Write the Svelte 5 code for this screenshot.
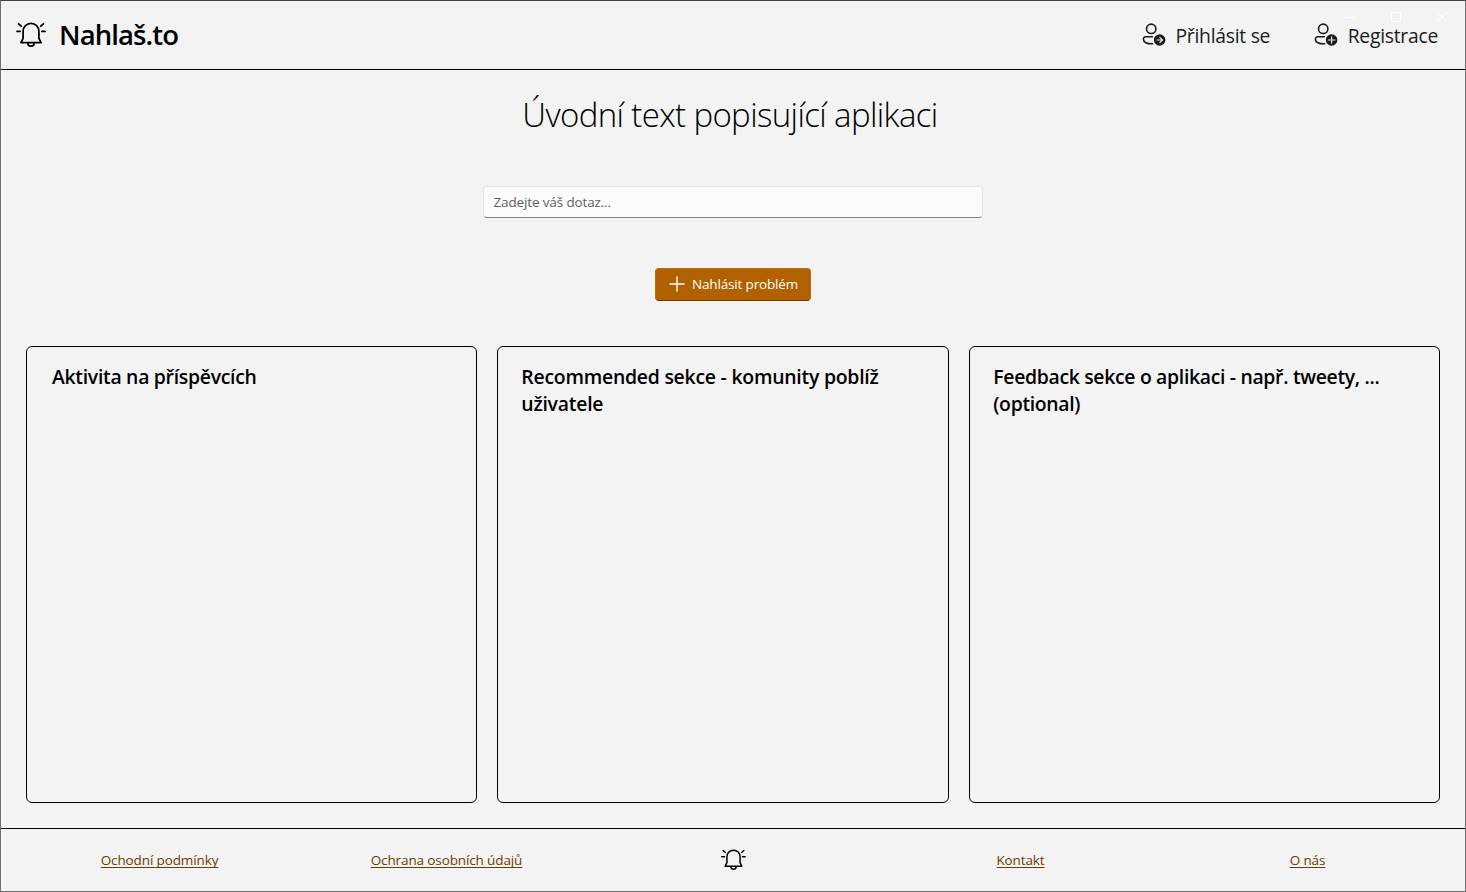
<script>
  const cards = [
    { title: 'Aktivita na příspěvcích', tracking: -0.29, indent: 25 },
    { title: 'Recommended sekce - komunity poblíž uživatele', tracking: -0.23, indent: 23.3 },
    { title: 'Feedback sekce o aplikaci - např. tweety, ... (optional)', tracking: -0.32, indent: 23.3 }
  ];
</script>

{#snippet bell(size)}
  <svg class="bell" width={size} height={size * 26 / 30} viewBox="0 0 30 26" fill="none" stroke="#000" stroke-width="1.8" stroke-linecap="round" stroke-linejoin="round">
    <path d="M5 20.7h20l-2.1-4.3V9.3a7.9 7.9 0 0 0-15.8 0v7.1z" />
    <path d="M11.8 21a3.2 3.2 0 0 0 6.4 0M1 9.4h3.2M25.8 9.4H29M2.6 1.8l2.6 2.4M27.4 1.8l-2.6 2.4" />
  </svg>
{/snippet}

{#snippet person(kind)}
  <svg class="person" width="24" height="24" viewBox="0 0 24 24" fill="none" stroke="#1b1b1b" stroke-width="1.6" stroke-linecap="round" stroke-linejoin="round">
    <circle cx="9.2" cy="5.8" r="4.7" />
    <path d="M10.4 13.8H3.6A2.2 2.2 0 0 0 1.4 16c0 3.3 3.4 5 9.2 4.8" />
    <circle cx="17.6" cy="17" r="5.8" fill="#1b1b1b" stroke="none" />
    {#if kind === 'plus'}
      <path d="M17.6 13.7v6.6M14.3 17h6.6" stroke="#f3f3f3" stroke-width="1.1" />
    {:else}
      <path d="M14.8 17h5.4M17.8 14.3l2.7 2.7-2.7 2.7" stroke="#f3f3f3" stroke-width="1.1" />
    {/if}
  </svg>
{/snippet}

<div class="window">
  <div class="controls">
    <svg width="104" height="12" viewBox="0 0 104 12" fill="none" stroke="#fff" stroke-width="1">
      <path d="M0 6.5h10M92 1l10 10M102 1L92 11" />
      <rect x="46.5" y="1.5" width="9" height="9" />
    </svg>
  </div>

  <header>
    <div class="brand">{@render bell(30)}<span>Nahlaš.to</span></div>
    <nav>
      <a class="login" href="#login">{@render person('arrow')}<span>Přihlásit se</span></a>
      <a href="#register">{@render person('plus')}<span>Registrace</span></a>
    </nav>
  </header>

  <main>
    <h1>Úvodní text popisující aplikaci</h1>
    <input type="text" placeholder="Zadejte váš dotaz..." />
    <button>
      <svg width="16" height="16" viewBox="0 0 16 16" stroke="#fff" stroke-width="1.4" stroke-linecap="round"><path d="M8 1v14M1 8h14" /></svg>
      <span>Nahlásit problém</span>
    </button>
    <div class="cards">
      {#each cards as card}
        <section><h2 style="letter-spacing: {card.tracking}px; padding-left: {card.indent}px">{card.title}</h2></section>
      {/each}
    </div>
  </main>

  <footer>
    <a href="#terms">Ochodní podmínky</a>
    <a href="#privacy">Ochrana osobních údajů</a>
    {@render bell(25)}
    <a href="#contact">Kontakt</a>
    <a href="#about">O nás</a>
  </footer>
</div>

<style>
  :global(body) { margin: 0; overflow: hidden; }
  * { box-sizing: border-box; }
  .window {
    position: relative;
    width: 1466px;
    height: 892px;
    display: flex;
    flex-direction: column;
    background: #f3f3f3;
    border: 1px solid #6e6e70;
    border-top-color: #464049;
    font-family: 'Open Sans', 'Noto Sans', sans-serif;
    color: #000;
  }
  svg { display: block; flex: none; }
  .controls { position: absolute; top: 10px; right: 16px; }
  header {
    height: 69px;
    display: flex;
    justify-content: space-between;
    align-items: center;
    padding: 0 27px 0 15px;
    border-bottom: 1px solid #000;
  }
  .brand { display: flex; align-items: center; gap: 13px; font-size: 27.5px; font-weight: 600; letter-spacing: -0.9px; line-height: 38px; }
  .brand :global(svg) { margin-bottom: 1px; }
  nav { display: flex; gap: 44px; }
  nav a { display: flex; align-items: center; gap: 9.5px; color: #1b1b1b; text-decoration: none; font-size: 19.3px; letter-spacing: -0.25px; line-height: 28px; }
  nav span { position: relative; top: 1px; }
  main { flex: 1; display: flex; flex-direction: column; align-items: center; padding: 21px 25px 25px; }
  h1 { margin: 0; padding-right: 6px; font-size: 33px; font-weight: 300; letter-spacing: -0.63px; line-height: 48px; }
  input {
    width: 500px;
    height: 32px;
    margin-top: 47px;
    padding: 0 9.5px;
    border: 1px solid #e5e5e5;
    border-bottom-color: #868686;
    border-radius: 4px;
    background: #fbfbfb;
    font: 13.5px 'Open Sans', sans-serif;
    letter-spacing: -0.14px;
  }
  input::placeholder { color: #616161; opacity: 1; }
  button {
    height: 33px;
    width: 156px;
    margin-top: 50px;
    display: flex;
    align-items: center;
    gap: 7px;
    padding: 0 0 2px 13px;
    border: 1px solid #b96e14;
    border-bottom-color: #6d3c00;
    border-radius: 4px;
    background: #b16100;
    color: #fff;
    font: 13.5px 'Open Sans', sans-serif;
    letter-spacing: -0.16px;
    white-space: nowrap;
  }
  .cards { flex: 1; width: 100%; margin-top: 45px; display: grid; grid-template-columns: 451fr 452fr 471fr; gap: 20px; }
  section { border: 1px solid #000; border-radius: 6px; padding: 16px 24px 16px 0; }
  h2 { margin: 0; font-size: 19.4px; font-weight: 600; line-height: 27px; }
  footer {
    height: 63px;
    display: grid;
    grid-template-columns: repeat(5, 1fr);
    align-items: center;
    justify-items: center;
    padding: 0 14px 0 15px;
    border-top: 1px solid #000;
  }
  footer :global(svg) { margin-bottom: 1px; }
  footer a { color: #6d3c00; font-size: 13.5px; letter-spacing: -0.12px; line-height: 20px; text-decoration: underline; text-decoration-thickness: 1px; text-underline-offset: 2px; text-decoration-skip-ink: none; }
</style>
